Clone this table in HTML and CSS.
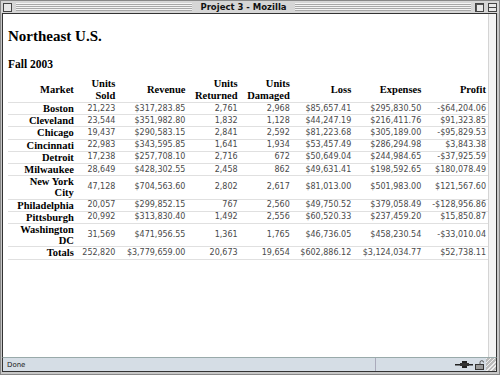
FILE: index.html
```html
<!DOCTYPE html>
<html>
<head>
<meta charset="utf-8">
<link rel="stylesheet" href="styles.css">
</head>
<body>
<div class="window">
  <div class="titlebar">
    <span class="box close"></span>
    <span class="stripes"></span>
    <span class="title">Project 3 - Mozilla</span>
    <span class="stripes"></span>
    <span class="box zoom"></span>
    <span class="box collapse"></span>
  </div>
  <div class="frame">
    <div class="viewport">
      <h1 class="heading">Northeast U.S.</h1>
      <h2 class="subheading">Fall 2003</h2>
      <table class="report">
        <thead>
          <tr>
            <th>Market</th><th>Units<br>Sold</th><th>Revenue</th><th>Units<br>Returned</th><th>Units<br>Damaged</th><th>Loss</th><th>Expenses</th><th>Profit</th>
          </tr>
        </thead>
        <tbody>
          <tr><th>Boston</th><td>21,223</td><td>$317,283.85</td><td>2,761</td><td>2,968</td><td>$85,657.41</td><td>$295,830.50</td><td>-$64,204.06</td></tr>
          <tr><th>Cleveland</th><td>23,544</td><td>$351,982.80</td><td>1,832</td><td>1,128</td><td>$44,247.19</td><td>$216,411.76</td><td>$91,323.85</td></tr>
          <tr><th>Chicago</th><td>19,437</td><td>$290,583.15</td><td>2,841</td><td>2,592</td><td>$81,223.68</td><td>$305,189.00</td><td>-$95,829.53</td></tr>
          <tr><th>Cincinnati</th><td>22,983</td><td>$343,595.85</td><td>1,641</td><td>1,934</td><td>$53,457.49</td><td>$286,294.98</td><td>$3,843.38</td></tr>
          <tr><th>Detroit</th><td>17,238</td><td>$257,708.10</td><td>2,716</td><td>672</td><td>$50,649.04</td><td>$244,984.65</td><td>-$37,925.59</td></tr>
          <tr><th>Milwaukee</th><td>28,649</td><td>$428,302.55</td><td>2,458</td><td>862</td><td>$49,631.41</td><td>$198,592.65</td><td>$180,078.49</td></tr>
          <tr><th>New York<br>City</th><td>47,128</td><td>$704,563.60</td><td>2,802</td><td>2,617</td><td>$81,013.00</td><td>$501,983.00</td><td>$121,567.60</td></tr>
          <tr><th>Philadelphia</th><td>20,057</td><td>$299,852.15</td><td>767</td><td>2,560</td><td>$49,750.52</td><td>$379,058.49</td><td>-$128,956.86</td></tr>
          <tr><th>Pittsburgh</th><td>20,992</td><td>$313,830.40</td><td>1,492</td><td>2,556</td><td>$60,520.33</td><td>$237,459.20</td><td>$15,850.87</td></tr>
          <tr><th>Washington<br>DC</th><td>31,569</td><td>$471,956.55</td><td>1,361</td><td>1,765</td><td>$46,736.05</td><td>$458,230.54</td><td>-$33,010.04</td></tr>
          <tr><th>Totals</th><td>252,820</td><td>$3,779,659.00</td><td>20,673</td><td>19,654</td><td>$602,886.12</td><td>$3,124,034.77</td><td>$52,738.11</td></tr>
        </tbody>
      </table>
    </div>
    <div class="gutter"></div>
  </div>
  <div class="statusbar">
    <span class="status-text">Done</span>
    <span class="status-cell"></span>
    <span class="status-icons">
      <svg width="18" height="9" viewBox="0 0 18 9"><rect x="0" y="4" width="18" height="1.5" fill="#222"/><rect x="7" y="1" width="5" height="7" fill="#222"/><rect x="5" y="3" width="9" height="3" fill="#333"/></svg>
      <svg width="9" height="10" viewBox="0 0 9 10"><rect x="0.5" y="4.5" width="8" height="5" fill="#999" stroke="#333"/><path d="M5 4.5V2.5a1.8 1.8 0 0 1 3.6 0" fill="none" stroke="#555"/></svg>
    </span>
    <span class="grip"></span>
  </div>
</div>
</body>
</html>
```

FILE: styles.css
```css
html, body {
  margin: 0;
  padding: 0;
  width: 500px;
  height: 375px;
  overflow: hidden;
  background: #a9a9a9;
}

.window {
  width: 500px;
  height: 375px;
  display: flex;
  flex-direction: column;
  background: #c8c8c8;
  box-sizing: border-box;
  border: 1px solid #888;
}

.titlebar {
  height: 12px;
  display: flex;
  align-items: center;
  gap: 4px;
  padding: 0 2px 0 2px;
  background: #d6d6d6;
}

.stripes {
  flex: 1;
  height: 8px;
  background: repeating-linear-gradient(to bottom, #f4f4f4 0, #f4f4f4 1px, #a8a8a8 1px, #a8a8a8 2px);
}

.title {
  font-family: "DejaVu Sans", Verdana, sans-serif;
  font-weight: bold;
  font-size: 8.5px;
  color: #111;
  padding: 0 4px;
  line-height: 12px;
}

.box {
  width: 7px;
  height: 7px;
  border: 1px solid #444;
  background: #e8e8e8;
}

.box.zoom {
  box-shadow: inset 4px 4px 0 -3px #555;
}

.box.collapse {
  background: linear-gradient(to bottom, #e8e8e8 0 3px, #444 3px 4px, #e8e8e8 4px);
}

.frame {
  flex: 1;
  display: flex;
  margin: 0 2px 0 1px;
  border: 1px solid #333;
  border-bottom: none;
  background: #fff;
  min-height: 0;
}

.viewport {
  flex: 1;
  padding: 0 0 0 5px;
  overflow: hidden;
}

.gutter {
  width: 7px;
  background: #f4f4f4;
  border-left: 1px solid #d4d4d4;
}

.heading {
  font-family: "Liberation Serif", "Times New Roman", serif;
  font-weight: bold;
  font-size: 15px;
  margin: 12px 0 0 0;
  line-height: 20px;
  color: #000;
}

.subheading {
  font-family: "Liberation Serif", "Times New Roman", serif;
  font-weight: bold;
  font-size: 11.5px;
  margin: 11px 0 0 0;
  line-height: 14px;
  color: #000;
}

.report {
  width: 100%;
  margin-top: 7px;
  border-collapse: collapse;
}

.report th {
  font-family: "Liberation Serif", "Times New Roman", serif;
  font-weight: bold;
  font-size: 10.5px;
  line-height: 11.2px;
  text-align: right;
  color: #000;
  padding: 0 2px;
}

.report thead th {
  line-height: 12px;
}

.report td {
  font-family: "DejaVu Sans", Verdana, sans-serif;
  font-size: 8px;
  color: #4a4a4a;
  text-align: right;
  padding: 0 2px;
  line-height: 10px;
}

.report tbody tr {
  border-top: 1px solid #e0e0e0;
}

.report tbody tr:last-child {
  border-bottom: 1px solid #e0e0e0;
}

.statusbar {
  height: 13px;
  display: flex;
  align-items: center;
  margin: 0 2px 2px 1px;
  border: 1px solid #333;
  border-top: 1px solid #9aa;
  background: #d5dde5;
}

.status-text {
  flex: 1;
  font-family: "DejaVu Sans", Verdana, sans-serif;
  font-size: 7px;
  color: #222;
  padding-left: 4px;
}

.status-cell {
  width: 77px;
  align-self: stretch;
  border-left: 1px solid #aab;
}

.status-icons {
  display: flex;
  align-items: center;
  gap: 2px;
  padding: 0 2px;
}

.grip {
  width: 10px;
  align-self: stretch;
  background: repeating-linear-gradient(135deg, #eee 0 1px, #bbb 1px 3px);
}
```
